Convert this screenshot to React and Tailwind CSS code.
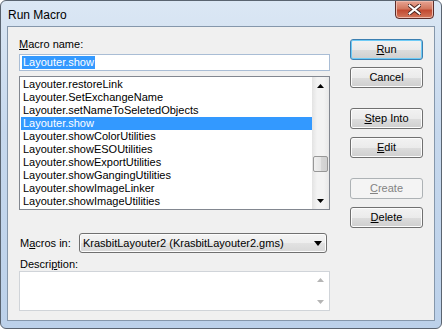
import React from "react";

const items = [
  "Layouter.restoreLink",
  "Layouter.SetExchangeName",
  "Layouter.setNameToSeletedObjects",
  "Layouter.show",
  "Layouter.showColorUtilities",
  "Layouter.showESOUtilities",
  "Layouter.showExportUtilities",
  "Layouter.showGangingUtilities",
  "Layouter.showImageLinker",
  "Layouter.showImageUtilities",
];

const UpArrow = ({ color = "#000" }) => (
  <svg width="7" height="4" viewBox="0 0 7 4">
    <path d="M3.5 0 L7 4 L0 4 Z" fill={color} />
  </svg>
);

const DownArrow = ({ color = "#000", w = 7, h = 4 }) => (
  <svg width={w} height={h} viewBox={`0 0 ${w} ${h}`}>
    <path d={`M0 0 L${w} 0 L${w / 2} ${h} Z`} fill={color} />
  </svg>
);

const Btn = ({ children, primary, disabled, className = "" }) => (
  <div
    className={`h-[21px] w-[73px] rounded-[3px] border flex items-center justify-center text-[11px] leading-none ${
      disabled
        ? "border-[#adb2b5] bg-[#f4f4f4] text-[#838383]"
        : primary
        ? "border-[#3c7fb1] bg-[linear-gradient(#f2f2f2_0%,#ebebeb_50%,#dddddd_51%,#cfcfcf_100%)] shadow-[inset_0_0_0_1px_#6ecbf6] text-black"
        : "border-[#707070] bg-[linear-gradient(#f2f2f2_0%,#ebebeb_50%,#dddddd_51%,#cfcfcf_100%)] shadow-[inset_0_0_0_1px_#fcfcfc] text-black"
    } ${className}`}
  >
    {children}
  </div>
);

export default function App() {
  return (
    <div
      className="w-[442px] h-[329px] overflow-hidden rounded-[6px] border border-[#5a6470] bg-[linear-gradient(180deg,#dbe7f4_0%,#c6d8ed_40%,#bcd1ea_100%)] flex flex-col"
      style={{ fontFamily: '"Liberation Sans", Arial, sans-serif' }}
    >
      {/* title bar */}
      <div className="h-[25px] flex items-start relative">
        <div className="pl-[7px] pt-[7px] text-[12px] leading-[14px] text-black">Run Macro</div>
        <div className="absolute left-[394px] top-[-1px] w-[39px] h-[19px] rounded-b-[4px] border border-[#5b2d2a] bg-[linear-gradient(180deg,#e8a493_0%,#d2785f_45%,#c24a32_55%,#d3775b_100%)] flex items-center justify-center shadow-[inset_0_0_0_1px_#eeb9ab]">
          <svg width="13" height="11" viewBox="0 0 13 11">
            <path d="M1.5 1.5 L11.5 9.5 M11.5 1.5 L1.5 9.5" stroke="#4a2520" strokeWidth="4" strokeLinecap="square" />
            <path d="M1.5 1.5 L11.5 9.5 M11.5 1.5 L1.5 9.5" stroke="#ffffff" strokeWidth="2" strokeLinecap="square" />
          </svg>
        </div>
      </div>

      {/* client area */}
      <div className="ml-[6px] w-[428px] h-[295px] border border-[#8597ab] bg-[#f0f0f0] flex text-[11px] text-black">
        {/* left column */}
        <div className="ml-[11px] w-[311px] flex flex-col pt-[10px]">
          <div className="h-[14px] leading-[14px]">
            <span className="underline">M</span>acro name:
          </div>
          <div className="mt-[3px] h-[17px] border border-[#a9bdd5] bg-white flex items-center pl-[2px]">
            <span className="bg-[#3399ff] text-white leading-[13px] px-[1px]">Layouter.show</span>
          </div>
          <div className="mt-[5px] h-[134px] border border-[#828790] bg-white flex">
            <div className="flex-1 pt-[1px] pl-[1px]">
              {items.map((it) => (
                <div
                  key={it}
                  className={`h-[13px] leading-[13px] pl-[2px] ${
                    it === "Layouter.show" ? "bg-[#3399ff] text-white" : ""
                  }`}
                >
                  {it}
                </div>
              ))}
            </div>
            <div className="w-[17px] bg-[linear-gradient(90deg,#e3e3e3,#f3f3f3_30%,#f3f3f3_70%,#e8e8e8)] flex flex-col items-center">
              <div className="h-[17px] flex items-center justify-center">
                <UpArrow />
              </div>
              <div className="mt-[62px] w-[15px] h-[16px] rounded-[2px] border border-[#979797] bg-[linear-gradient(90deg,#f0f0f0,#e5e5e5_50%,#d7d7d7_51%,#d0d0d0)]" />
              <div className="flex-1" />
              <div className="h-[17px] flex items-center justify-center">
                <DownArrow />
              </div>
            </div>
          </div>

          <div className="mt-[23px] h-[20px] flex items-center">
            <div className="w-[60px] pl-[1px]">
              M<span className="underline">a</span>cros in:
            </div>
            <div className="w-[248px] h-[20px] rounded-[3px] border border-[#707070] bg-[linear-gradient(#f4f4f4_0%,#eeeeee_50%,#e2e2e2_51%,#d8d8d8_100%)] shadow-[inset_0_0_0_1px_#fcfcfc] flex items-center pl-[3px] pr-[4px]">
              <span className="flex-1">KrasbitLayouter2 (KrasbitLayouter2.gms)</span>
              <DownArrow w={8} h={5} />
            </div>
          </div>

          <div className="mt-[5px] h-[12px] leading-[12px] pl-[1px]">
            Descri<span className="underline">p</span>tion:
          </div>
          <div className="mt-[1px] h-[40px] border border-[#d0d4d9] bg-white flex">
            <div className="flex-1" />
            <div className="w-[17px] flex flex-col items-center justify-between py-[6px]">
              <UpArrow color="#b5b5b5" />
              <DownArrow color="#b5b5b5" />
            </div>
          </div>
        </div>

        {/* right column */}
        <div className="ml-[20px] pt-[12px] flex flex-col">
          <Btn primary>
            <span className="underline">R</span>un
          </Btn>
          <Btn className="mt-[7px]">Cancel</Btn>
          <Btn className="mt-[20px]">
            <span className="underline">S</span>tep Into
          </Btn>
          <Btn className="mt-[8px]">
            <span className="underline">E</span>dit
          </Btn>
          <Btn disabled className="mt-[20px]">
            <span className="underline">C</span>reate
          </Btn>
          <Btn className="mt-[8px]">
            <span className="underline">D</span>elete
          </Btn>
        </div>
      </div>
    </div>
  );
}
